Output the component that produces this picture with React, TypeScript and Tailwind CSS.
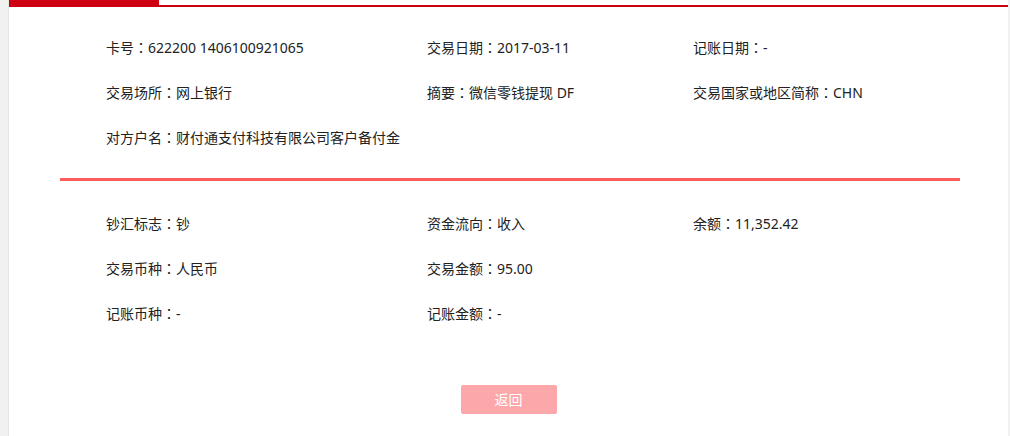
import React from "react";

const Row1 = [
  ["卡号：622200 1406100921065", "交易日期：2017-03-11", "记账日期：-"],
  ["交易场所：网上银行", "摘要：微信零钱提现 DF", "交易国家或地区简称：CHN"],
  ["对方户名：财付通支付科技有限公司客户备付金", "", ""],
];
const Row2 = [
  ["钞汇标志：钞", "资金流向：收入", "余额：11,352.42"],
  ["交易币种：人民币", "交易金额：95.00", ""],
  ["记账币种：-", "记账金额：-", ""],
];

function Item({ text }: { text: string }) {
  if (!text) return null;
  const [a, b] = text.split("：");
  return (
    <>
      {a}
      <span style={{ fontFamily: '"Noto Sans CJK TC", sans-serif' }}>：</span>
      {b}
    </>
  );
}

function Grid({ rows }: { rows: string[][] }) {
  return (
    <div className="pl-[97px]">
      {rows.map((r, i) => (
        <div key={i} className="flex h-[45px] items-center">
          <div className="w-[321px] whitespace-nowrap"><Item text={r[0]} /></div>
          <div className="w-[266px] whitespace-nowrap"><Item text={r[1]} /></div>
          <div className="whitespace-nowrap"><Item text={r[2]} /></div>
        </div>
      ))}
    </div>
  );
}

export default function App() {
  return (
    <div
      className="flex h-[436px] w-[1010px] overflow-hidden bg-[#f1f1f1] text-[14px] text-[#222]"
      style={{ fontFamily: '"Noto Sans", "Noto Sans CJK SC", sans-serif' }}
    >
      <div className="w-[9px] shrink-0 border-r border-[#e6e6e6]" />
      <div className="flex-1 bg-white">
        <div className="flex h-[7px]">
          <div className="h-[7px] w-[150px] bg-[#cc0011]" />
          <div className="mt-[5px] h-[2px] flex-1 bg-[#cc0011]" />
        </div>
        <div className="pt-[18px]">
          <Grid rows={Row1} />
        </div>
        <div className="ml-[51px] mt-[18px] h-[3px] w-[900px] bg-[#ff5c5c]" />
        <div className="pt-[20px]">
          <Grid rows={Row2} />
        </div>
        <div className="mt-[49px] flex justify-center">
          <button className="flex h-[29px] w-[96px] items-center justify-center rounded-[2px] bg-[#fca8aa] text-[14px] text-white">
            返回
          </button>
        </div>
      </div>
      <div className="w-[2px] shrink-0" />
    </div>
  );
}
